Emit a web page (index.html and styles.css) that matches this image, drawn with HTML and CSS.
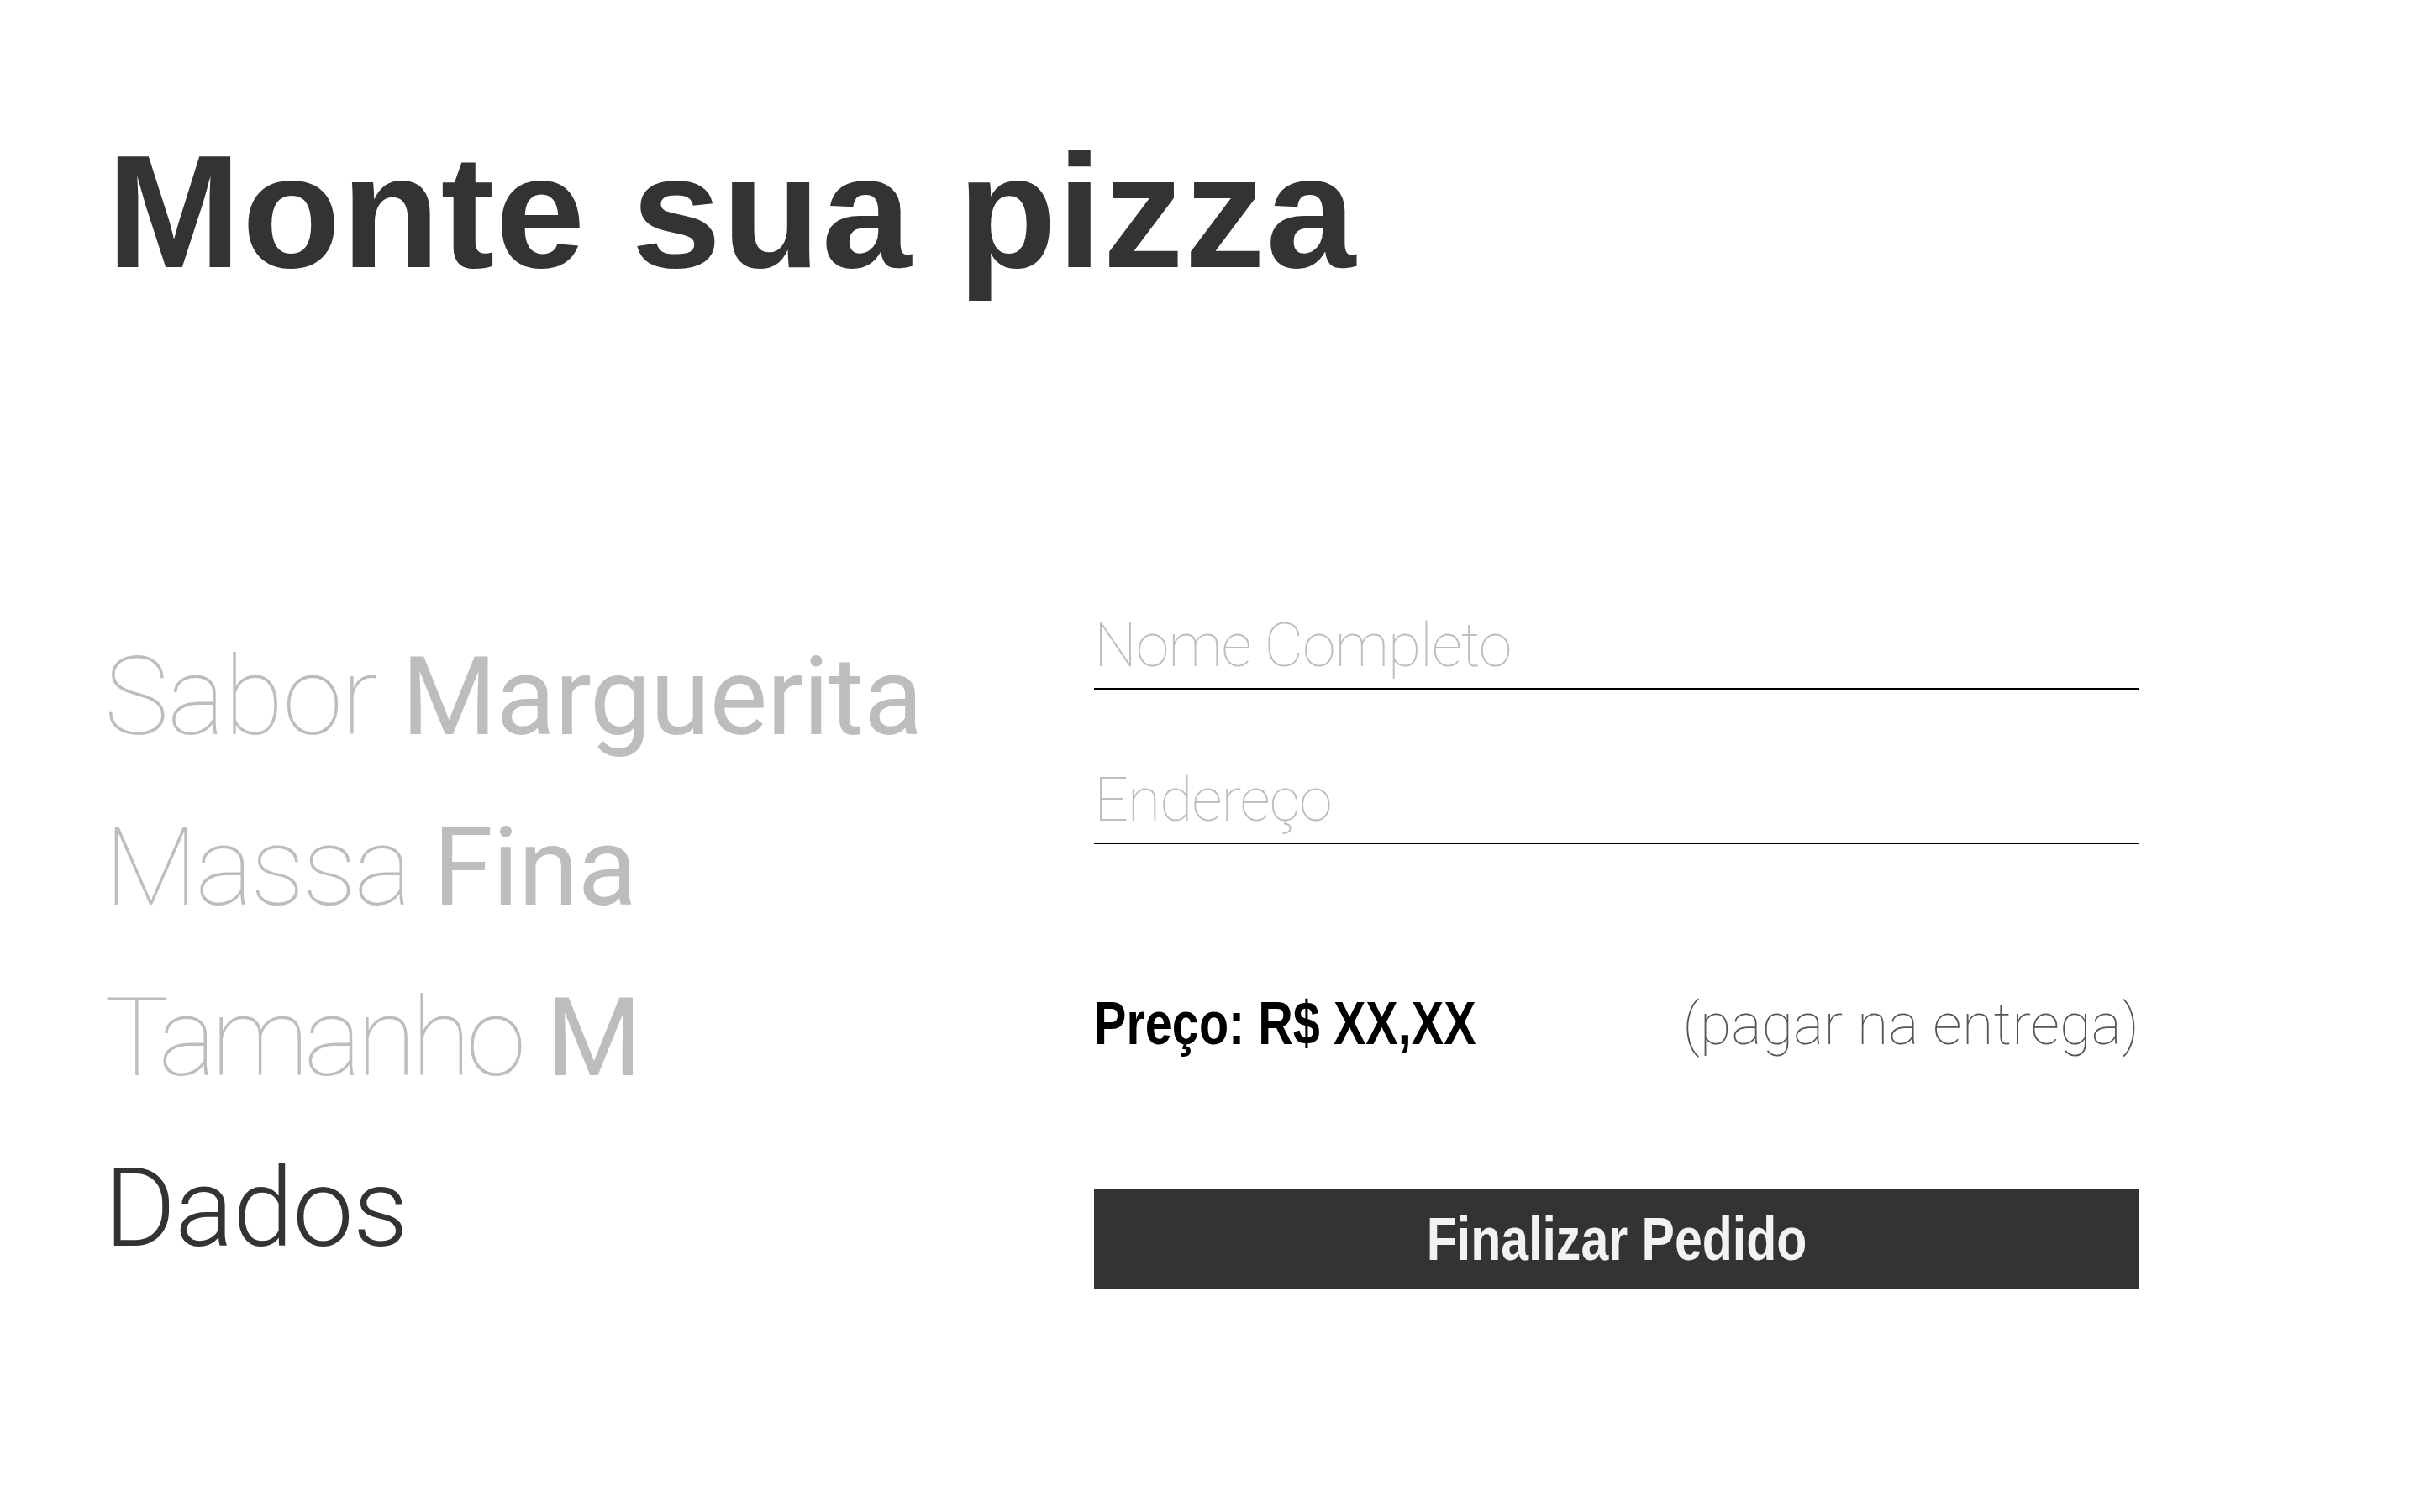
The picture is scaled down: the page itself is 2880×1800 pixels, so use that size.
FILE: index.html
```html
<!DOCTYPE html>
<html lang="pt-BR">
<head>
<meta charset="utf-8">
<title>Monte sua pizza</title>
<link rel="stylesheet" href="styles.css">
</head>
<body>
<main class="page">
  <h1 class="title">Monte sua pizza</h1>
  <div class="builder">
    <ul class="steps">
      <li class="step"><span class="step-label step-label-wide">Sabor </span><span class="step-value">Marguerita</span></li>
      <li class="step"><span class="step-label">Massa </span><span class="step-value">Fina</span></li>
      <li class="step"><span class="step-label step-label-tight">Tamanho </span><span class="step-value">M</span></li>
      <li class="step step-active">Dados</li>
    </ul>
    <form class="order">
      <input class="field" type="text" placeholder="Nome Completo">
      <input class="field field-second" type="text" placeholder="Endereço">
      <div class="price-row">
        <span class="price">Preço: R$ XX,XX</span>
        <span class="price-note">(pagar na entrega)</span>
      </div>
      <button class="submit" type="button"><span class="submit-text">Finalizar Pedido</span></button>
    </form>
  </div>
</main>
</body>
</html>
```

FILE: styles.css
```css
html, body {
  margin: 0;
  padding: 0;
  background: #ffffff;
}

.page {
  padding: 156px 0 0 124px;
  font-family: "Roboto", "Liberation Sans", sans-serif;
}

.title {
  margin: 0 0 370px 3px;
  font-family: "Liberation Sans", Arial, sans-serif;
  font-weight: 700;
  font-size: 192px;
  line-height: 1;
  color: #333333;
  letter-spacing: 1px;
}

.builder {
  display: flex;
  align-items: flex-start;
}

.steps {
  flex: 0 0 1178px;
  margin: 0;
  padding: 10px 0 0 0;
  list-style: none;
}

.step {
  font-size: 130px;
  line-height: 203px;
  color: #bdbdbd;
  white-space: nowrap;
}

.step-label {
  font-weight: 100;
  letter-spacing: -3px;
}

.step-label-wide {
  letter-spacing: -1.5px;
}

.step-label-tight {
  letter-spacing: -6px;
  word-spacing: 5px;
}

.step-value {
  font-weight: 400;
  letter-spacing: -1px;
}

.step-active {
  font-weight: 300;
  color: #333333;
  letter-spacing: -1px;
}

.order {
  flex: 0 0 1244px;
  display: flex;
  flex-direction: column;
}

.field {
  box-sizing: content-box;
  display: block;
  width: 100%;
  height: 101px;
  margin: 0;
  padding: 0;
  border: none;
  border-bottom: 2px solid #000000;
  border-radius: 0;
  outline: none;
  background: transparent;
  font-family: "Roboto", sans-serif;
  font-weight: 100;
  font-size: 72px;
  letter-spacing: -1.2px;
  color: #333333;
}

.field::placeholder {
  color: #bdbdbd;
  opacity: 1;
}

.field-second {
  margin-top: 81px;
}

.price-row {
  display: flex;
  justify-content: space-between;
  align-items: baseline;
  height: 72px;
  margin-top: 177px;
}

.price {
  display: inline-block;
  font-family: "Liberation Sans", Arial, sans-serif;
  font-weight: 700;
  font-size: 72px;
  line-height: 72px;
  color: #000000;
  transform: scaleX(0.8);
  transform-origin: left center;
  white-space: nowrap;
}

.price-note {
  font-family: "Roboto", sans-serif;
  font-weight: 100;
  font-size: 68px;
  line-height: 72px;
  color: #555555;
  letter-spacing: 0.3px;
}

.submit {
  display: flex;
  justify-content: center;
  align-items: center;
  width: 100%;
  height: 120px;
  margin: 161px 0 0 0;
  padding: 0;
  border: none;
  border-radius: 0;
  background: #333333;
  cursor: pointer;
}

.submit-text {
  display: inline-block;
  color: #f2f2f2;
  font-family: "Liberation Sans", Arial, sans-serif;
  font-weight: 700;
  font-size: 72px;
  line-height: 120px;
  transform: scaleX(0.82);
  white-space: nowrap;
}
```
